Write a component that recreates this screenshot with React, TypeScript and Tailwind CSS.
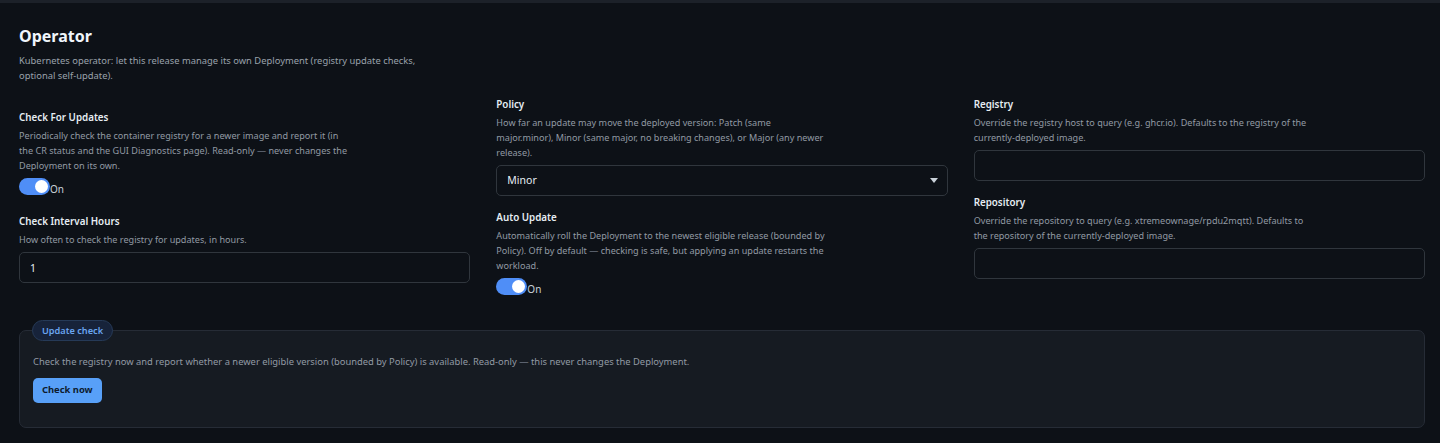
import React, { useState } from 'react';

const font = "font-['Noto_Sans','Open_Sans',sans-serif]";

const Toggle: React.FC<{ on: boolean; onChange: (v: boolean) => void }> = ({ on, onChange }) => (
  <label className="block text-[10px] leading-[15px] text-[#c9d1d9] cursor-pointer">
    <button
      type="button"
      onClick={() => onChange(!on)}
      className={`inline-flex items-center w-[31px] h-[17px] rounded-full px-[2px] align-baseline ${
        on ? 'bg-[#4f8ef7] justify-end' : 'bg-[#30363d] justify-start'
      }`}
    >
      <span className="block w-[13px] h-[13px] rounded-full bg-white" />
    </button>
    <span>{on ? 'On' : 'Off'}</span>
  </label>
);

// desc lines are broken where the original wraps them
const Field: React.FC<{ label: string; desc: string[]; children: React.ReactNode }> = ({ label, desc, children }) => (
  <div className="flex flex-col">
    <div className="text-[9.8px] leading-[15px] font-semibold text-[#e6edf3]">{label}</div>
    <p className="mt-[3px] whitespace-nowrap text-[9.1px] leading-[15px] text-[#929aa4]">
      {desc.map((line, i) => (
        <React.Fragment key={i}>
          {i > 0 && <br />}
          {line}
        </React.Fragment>
      ))}
    </p>
    <div className="mt-[5px]">{children}</div>
  </div>
);

const inputCls =
  'w-full h-[31px] rounded-[5px] border border-[#30363d] bg-[#0d1117] px-[10px] text-[10.5px] text-[#e6edf3] outline-none';

export default function App() {
  const [checkUpdates, setCheckUpdates] = useState(true);
  const [autoUpdate, setAutoUpdate] = useState(true);

  return (
    <div className={`min-h-[443px] bg-[#0d1117] ${font}`}>
      <div className="h-[3px] bg-[#1c2129]" />
      <div className="pl-[19px] pr-[15px] pb-[15px]">
        <h2 className="mt-[21px] text-[16px] leading-[24px] font-bold text-[#f0f6fc]">Operator</h2>
        <p className="mt-[5px] max-w-[420px] text-[9.4px] leading-[15px] text-[#9aa1ab]">
          Kubernetes operator: let this release manage its own Deployment (registry update checks, optional self-update).
        </p>

        <div className="mt-[14px] grid grid-cols-3 gap-x-[26px]">
          <div className="flex flex-col gap-[17px] pt-[13px]">
            <Field
              label="Check For Updates"
              desc={[
                'Periodically check the container registry for a newer image and report it (in',
                'the CR status and the GUI Diagnostics page). Read-only — never changes the',
                'Deployment on its own.',
              ]}
            >
              <Toggle on={checkUpdates} onChange={setCheckUpdates} />
            </Field>
            <Field label="Check Interval Hours" desc={['How often to check the registry for updates, in hours.']}>
              <input className={inputCls} defaultValue="1" />
            </Field>
          </div>

          <div className="flex flex-col gap-[14px]">
            <Field
              label="Policy"
              desc={[
                'How far an update may move the deployed version: Patch (same',
                'major.minor), Minor (same major, no breaking changes), or Major (any newer',
                'release).',
              ]}
            >
              <div className="relative">
                <select className={`${inputCls} appearance-none`} defaultValue="minor">
                  <option value="patch">Patch</option>
                  <option value="minor">Minor</option>
                  <option value="major">Major</option>
                </select>
                <svg
                  className="pointer-events-none absolute right-[10px] top-[13px]"
                  width="8"
                  height="5"
                  viewBox="0 0 8 5"
                >
                  <path d="M0 0h8L4 5z" fill="#c9d1d9" />
                </svg>
              </div>
            </Field>
            <Field
              label="Auto Update"
              desc={[
                'Automatically roll the Deployment to the newest eligible release (bounded by',
                'Policy). Off by default — checking is safe, but applying an update restarts the',
                'workload.',
              ]}
            >
              <Toggle on={autoUpdate} onChange={setAutoUpdate} />
            </Field>
          </div>

          <div className="flex flex-col gap-[14px]">
            <Field
              label="Registry"
              desc={[
                'Override the registry host to query (e.g. ghcr.io). Defaults to the registry of the',
                'currently-deployed image.',
              ]}
            >
              <input className={inputCls} />
            </Field>
            <Field
              label="Repository"
              desc={[
                'Override the repository to query (e.g. xtremeownage/rpdu2mqtt). Defaults to',
                'the repository of the currently-deployed image.',
              ]}
            >
              <input className={inputCls} />
            </Field>
          </div>
        </div>

        <div className="relative mt-[33px] rounded-[7px] border border-[#262c36] bg-[#161b22] px-[13px] pt-[23px] pb-[24px]">
          <span className="absolute left-[12px] -top-[11px] rounded-full border border-[#263a57] bg-[#17233a] px-[9px] text-[9.2px] leading-[19px] font-semibold text-[#6aa5ef]">
            Update check
          </span>
          <p className="text-[9.4px] leading-[15px] text-[#929aa4]">
            Check the registry now and report whether a newer eligible version (bounded by Policy) is available. Read-only — this never changes the Deployment.
          </p>
          <button
            type="button"
            className="mt-[9px] h-[25px] rounded-[5px] bg-[#58a0f8] px-[9px] text-[9.4px] font-bold text-[#0d1b2e]"
          >
            Check now
          </button>
        </div>
      </div>
    </div>
  );
}
